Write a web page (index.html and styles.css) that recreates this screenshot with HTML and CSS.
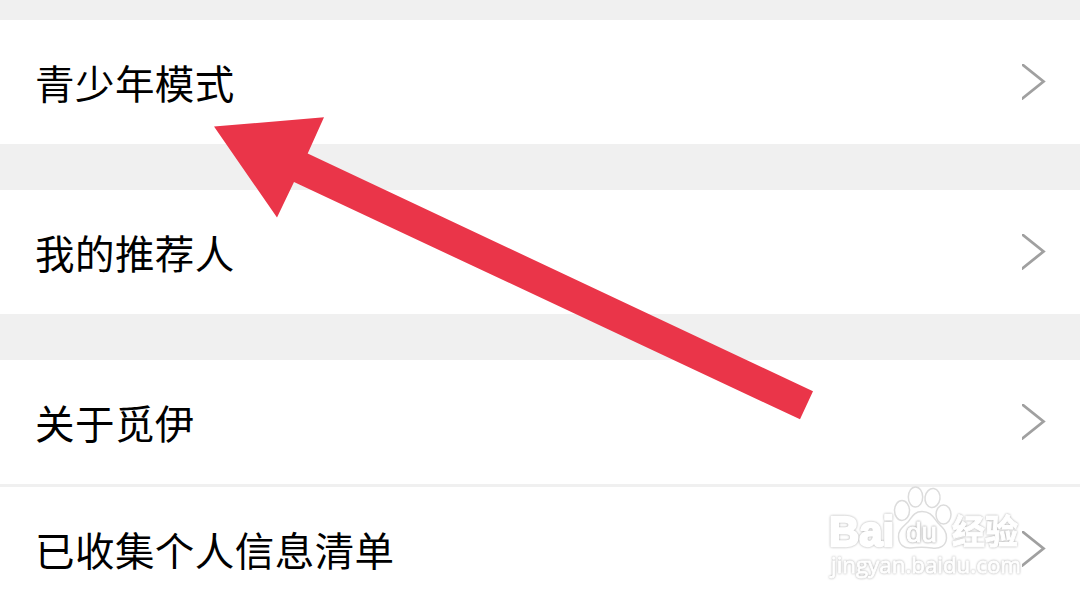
FILE: index.html
```html
<!DOCTYPE html>
<html lang="zh-CN">
<head>
  <meta charset="UTF-8" />
  <meta name="viewport" content="width=device-width, initial-scale=1" />
  <title>设置</title>
  <link rel="stylesheet" href="styles.css">
</head>
<body>
  <div class="settings">
    <div class="group">
      <div class="row">
        <span class="label">青少年模式</span>
        <svg class="chevron" viewBox="0 0 24 36"><path d="M-1 -0.500 L21.500 17.500 L-1 35.500" /></svg>
      </div>
    </div>
    <div class="group">
      <div class="row">
        <span class="label">我的推荐人</span>
        <svg class="chevron" viewBox="0 0 24 36"><path d="M-1 -0.500 L21.500 17.500 L-1 35.500" /></svg>
      </div>
    </div>
    <div class="group">
      <div class="row">
        <span class="label">关于觅伊</span>
        <svg class="chevron" viewBox="0 0 24 36"><path d="M-1 -0.500 L21.500 17.500 L-1 35.500" /></svg>
      </div>
      <div class="row">
        <span class="label">已收集个人信息清单</span>
        <svg class="chevron" viewBox="0 0 24 36"><path d="M-1 -0.500 L21.500 17.500 L-1 35.500" /></svg>
      </div>
    </div>
  </div>

  <!-- pointer arrow -->
  <svg class="arrow" viewBox="0 0 1080 602">
    <polygon points="214,126.5 324,117.3 307.7,153.5 813,391.3 800,419.3 294,182 277,217.5" />
  </svg>

  <!-- watermark -->
  <svg class="watermark" viewBox="0 0 210 110">
    <text class="wm-logo" x="9" y="66" textLength="65" lengthAdjust="spacingAndGlyphs">Bai</text>
    <ellipse cx="82" cy="30.500" rx="7.500" ry="10" />
    <ellipse cx="95.500" cy="17" rx="7.200" ry="10" />
    <ellipse cx="112.500" cy="18" rx="7.500" ry="9.500" transform="rotate(8 112.500 18)" />
    <ellipse cx="123.500" cy="34.500" rx="7.500" ry="9.500" />
    <path d="M102 31.500 C94 31.500 92 37 88 42 C83 47 78 50 78.500 57 C79 65 84 68.500 91 68 C98 67 105 67 112 68 C120 69 126 66 126.500 58 C127 51 122 47 118 43 C113 37 111 31.500 102 31.500 Z" />
    <text class="wm-du" x="86" y="61.500" textLength="31" lengthAdjust="spacingAndGlyphs">du</text>
    <text class="wm-cn" x="132" y="64" textLength="66" lengthAdjust="spacingAndGlyphs">经验</text>
    <text class="wm-url" x="11" y="92.500" textLength="190" lengthAdjust="spacingAndGlyphs">jingyan.baidu.com</text>
  </svg>
</body>
</html>
```
FILE: styles.css
```css
body {
  margin: 0;
  height: 602px;
  overflow: hidden;
  position: relative;
  background-color: #f0f0f0;
  color: #000;
  font-family: "Noto Sans CJK SC", sans-serif;
}
.settings {
  display: flex;
  flex-direction: column;
  gap: 46px;
  padding-top: 20px;
}
.group {
  display: flex;
  flex-direction: column;
  gap: 3px;
}
.row {
  display: flex;
  justify-content: space-between;
  align-items: center;
  box-sizing: border-box;
  height: 124px;
  padding: 0 34px 0 35px;
  background-color: #fff;
}
.label {
  font-size: 39.5px;
  line-height: 60px;
  font-weight: 400;
  letter-spacing: 0.45px;
}
.chevron {
  width: 24px;
  height: 36px;
  fill: none;
  stroke: #a0a0a0;
  stroke-width: 2.8;
}
.arrow {
  position: absolute;
  top: 0;
  left: 0;
  width: 1080px;
  height: 602px;
  fill: #ea3549;
}
.watermark {
  position: absolute;
  left: 820px;
  top: 480px;
  width: 210px;
  height: 110px;
  fill: #fff;
  stroke: #dcdcdc;
  stroke-width: 1.5;
  font-family: "Liberation Sans", Arial, sans-serif;
}
/* white letters, the soft shadow makes the outline */
.wm-logo,
.wm-du,
.wm-cn,
.wm-url {
  stroke: #fff;
  stroke-linejoin: round;
  filter: drop-shadow(0 0 0.8px #aaa);
}
.wm-logo {
  font-size: 42px;
  font-weight: bold;
  stroke-width: 2.5;
}
.wm-du {
  font-size: 27px;
  stroke-width: 1;
  filter: drop-shadow(0 0 0.8px #888);
}
.wm-cn {
  font-family: "Noto Sans CJK SC", sans-serif;
  font-size: 34px;
  font-weight: bold;
  stroke-width: 1;
}
.wm-url {
  font-family: "Open Sans", sans-serif;
  font-size: 22.5px;
  stroke-width: 0.8;
}
```
